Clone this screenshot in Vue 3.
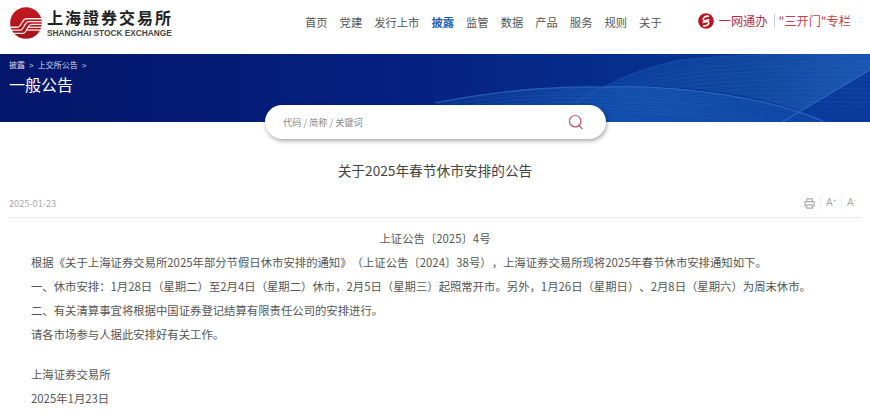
<script setup>
const navItems = ['首页', '党建', '发行上市', '披露', '监管', '数据', '产品', '服务', '规则', '关于']
const bodyLines = [
  '根据《关于上海证券交易所2025年部分节假日休市安排的通知》（上证公告〔2024〕38号），上海证券交易所现将2025年春节休市安排通知如下。',
  '一、休市安排：1月28日（星期二）至2月4日（星期二）休市，2月5日（星期三）起照常开市。另外，1月26日（星期日）、2月8日（星期六）为周末休市。',
  '二、有关清算事宜将根据中国证券登记结算有限责任公司的安排进行。',
  '请各市场参与人据此安排好有关工作。',
]
const fineLines = Array.from({ length: 11 }, (_, i) => {
  const d = i * 4.5
  return `M${600 + i * 8} ${36 + d * 0.3} C${680 + i * 4} ${8 + d} ${780} ${6 + d} 870 ${8 + d}`
})
const lowerLines = Array.from({ length: 6 }, (_, i) => {
  const d = i * 4
  return `M${450 + i * 10} ${50 + d * 0.6} C${560} ${34 + d} ${680} ${38 + d} ${770 - i * 8} 68`
})
</script>

<template>
  <div class="page">
    <header class="topbar">
      <div class="logo">
        <svg class="logo-mark" viewBox="0 0 34 34" width="34" height="32">
          <defs>
            <linearGradient id="lg" x1="0" y1="0" x2="0" y2="1">
              <stop offset="0" stop-color="#c4161f" />
              <stop offset="1" stop-color="#a5141b" />
            </linearGradient>
          </defs>
          <circle cx="17" cy="17" r="16.800" fill="url(#lg)" />
          <g fill="none" stroke="#f6e8e2" stroke-width="1.400">
            <path d="M1 21.500 L8 21.500 C12 21.500 12.500 13 17 12.500 L33.500 12.500" />
            <path d="M2 24.500 L11 24.500 C15 24.500 15 15.500 20 15.500 L34 15.500" />
            <path d="M4 28 L14 28 C18 28 18 18.500 23 18.500 L34 18.500" />
            <path d="M19 21.500 L34 21.500" />
            <path d="M17 24.500 L32.500 24.500" />
          </g>
        </svg>
        <div class="logo-text">
          <div class="logo-cn">上海證券交易所</div>
          <div class="logo-en">SHANGHAI STOCK EXCHANGE</div>
        </div>
      </div>
      <nav class="nav">
        <a v-for="n in navItems" :key="n" :class="{ active: n === '披露' }">{{ n }}</a>
      </nav>
      <div class="quick">
        <svg viewBox="0 0 16 16" width="16" height="16">
          <circle cx="8" cy="8" r="7.800" fill="#b5161f" />
          <path d="M11 3.200 C7 2.800 4.500 5 5.500 7 C6.500 9 10 6.500 11.500 6.500" fill="none" stroke="#fff" stroke-width="1.600" />
          <path d="M5 12.800 C9 13.200 11.500 11 10.500 9 C9.500 7.500 6 9.500 4.500 9.500" fill="none" stroke="#fff" stroke-width="1.600" />
        </svg>
        <span class="quick-a">一网通办</span>
        <i class="sep"></i>
        <span class="quick-b">"三开门"专栏</span>
      </div>
    </header>

    <section class="hero">
      <svg class="waves" viewBox="0 0 870 68" preserveAspectRatio="none">
        <defs>
          <linearGradient id="bg" x1="0" y1="0" x2="1" y2="0">
            <stop offset="0" stop-color="#04166a" />
            <stop offset="0.45" stop-color="#052080" />
            <stop offset="0.75" stop-color="#06308f" />
            <stop offset="1" stop-color="#0a3f9f" />
          </linearGradient>
          <linearGradient id="band" x1="0" y1="0" x2="1" y2="0">
            <stop offset="0" stop-color="#0a3c9c" />
            <stop offset="0.6" stop-color="#11489f" />
            <stop offset="1" stop-color="#1b57b4" />
          </linearGradient>
          <linearGradient id="low" x1="0" y1="0" x2="1" y2="0">
            <stop offset="0" stop-color="#0a2f8e" />
            <stop offset="0.5" stop-color="#1350ae" />
            <stop offset="1" stop-color="#0e45a4" />
          </linearGradient>
        </defs>
        <rect width="870" height="68" fill="url(#bg)" />
        <path d="M575 49 C620 22 660 6 702 4 C760 -1 820 0 870 1 L870 16 L782 68 L825 68 C780 44 690 28 602 33 Z" fill="url(#band)" />
        <path d="M782 68 L870 16 L870 68 Z" fill="#0a3a9b" />
        <path d="M435 49 C490 38 550 32 602 33 C680 30 770 44 825 68 L510 68 Z" fill="url(#low)" />
        <g fill="none" stroke="#3a74c8" stroke-width="0.500" opacity="0.35">
          <path v-for="d in fineLines" :key="d" :d="d" />
          <path v-for="d in lowerLines" :key="d" :d="d" />
        </g>
        <g fill="none" stroke="#3f7bd0" stroke-width="1.200" opacity="0.6">
          <path d="M435 49 C490 38 550 32 602 33 C680 30 770 44 825 68" />
          <path d="M575 49 C620 22 660 6 702 4 C760 -1 820 0 870 1" opacity="0.4" />
          <path d="M782 68 L870 16" />
        </g>
      </svg>
      <div class="hero-text">
        <div class="crumbs">披露<span class="gt">&gt;</span>上交所公告<span class="gt">&gt;</span></div>
        <h1>一般公告</h1>
      </div>
      <div class="search">
        <span class="placeholder">代码 / 简称 / 关键词</span>
        <svg viewBox="0 0 16 16" width="16" height="16">
          <circle cx="7.200" cy="7.200" r="5.700" fill="none" stroke="#b85a60" stroke-width="1.200" />
          <path d="M11.200 11.500 L14.500 15" stroke="#b85a60" stroke-width="1.200" fill="none" />
        </svg>
      </div>
    </section>

    <main class="article">
      <h2>关于2025年春节休市安排的公告</h2>
      <div class="meta">
        <span class="date">2025-01-23</span>
        <div class="tools">
          <svg viewBox="0 0 12 12" width="11" height="11">
            <path d="M3 4 V1 H9 V4 M3 9 H1 V4 H11 V9 H9 M3 7.500 H9 V11 H3 Z" fill="none" stroke="#aaa" stroke-width="1.200" />
          </svg>
          <span class="tool">A<sup>+</sup></span>
          <span class="tool">A<sup>-</sup></span>
        </div>
      </div>
      <div class="content">
        <p class="center">上证公告〔2025〕4号</p>
        <p v-for="l in bodyLines" :key="l">{{ l }}</p>
        <p class="blank"></p>
        <p>上海证券交易所</p>
        <p>2025年1月23日</p>
      </div>
    </main>
  </div>
</template>

<style>
html, body { margin: 0; background: #fff; overflow: hidden; }
</style>

<style scoped>
.page {
  width: 870px;
  height: 414px;
  overflow: hidden;
  font-family: "Noto Sans CJK SC", "Noto Sans", sans-serif;
  color: #555;
}
.topbar {
  height: 54px;
  display: flex;
  align-items: center;
  box-sizing: border-box;
  padding: 0 19px 9px 9px;
}
.logo { display: flex; align-items: center; gap: 4px; width: 296px; flex: none; }
.logo-mark { flex: none; }
.logo-text { display: flex; flex-direction: column; }
.logo-cn {
  font-family: "Noto Sans CJK TC", sans-serif;
  font-size: 16px;
  font-weight: 700;
  letter-spacing: 2px;
  line-height: 21px;
  color: #222;
  white-space: nowrap;
}
.logo-en {
  font-family: "Liberation Sans", sans-serif;
  font-size: 8.300px;
  font-weight: 700;
  line-height: 10px;
  color: #444;
  white-space: nowrap;
}
.nav { display: flex; gap: 12px; margin-bottom: 2px; font-size: 11.300px; line-height: 16px; color: #555; white-space: nowrap; }
.nav .active { color: #1f62b5; font-weight: 700; }
.quick { margin-left: auto; margin-bottom: 4px; display: flex; align-items: center; font-size: 12.200px; color: #b5303a; white-space: nowrap; }
.quick-a { margin-left: 5px; }
.sep { width: 1px; height: 14px; background: #ccc; margin: 0 4px 0 6px; }
.quick-b { color: #c2424c; }

.hero { position: relative; height: 68px; }
.waves { position: absolute; inset: 0; width: 100%; height: 100%; display: block; }
.hero-text { position: relative; padding: 4px 0 0 9px; color: #fff; }
.crumbs { font-size: 8px; line-height: 14px; color: #d6def0; white-space: nowrap; }
.gt { margin: 0 4px; font-family: "Liberation Sans", sans-serif; }
h1 { margin: -1px 0 0; font-size: 16px; font-weight: 400; line-height: 24px; }
.search {
  position: absolute;
  left: 265px;
  top: 51px;
  width: 341px;
  height: 34px;
  box-sizing: border-box;
  padding: 0 22px 0 18px;
  background: #fff;
  border-radius: 17px;
  box-shadow: 1px 2px 4px rgba(0, 0, 0, 0.35);
  display: flex;
  align-items: center;
  justify-content: space-between;
}
.placeholder { font-size: 9.200px; color: #888; }

.article { padding: 0 8px; }
h2 {
  margin: 0;
  padding-top: 37px;
  font-size: 13.700px;
  line-height: 22px;
  font-weight: 400;
  color: #444;
  text-align: center;
}
.meta {
  margin-top: 8px;
  height: 29px;
  box-sizing: border-box;
  border-bottom: 1px solid #e8e8e8;
  display: flex;
  align-items: center;
  justify-content: space-between;
  padding: 0 0 0 1px;
}
.date { font-size: 9.200px; color: #aaa; }
.tools { display: flex; align-items: center; color: #aaa; }
.tools svg { margin-right: 5px; }
.tool { font-family: "Liberation Sans", sans-serif; font-size: 10px; width: 21px; box-sizing: border-box; border-left: 1px solid #eee; padding-left: 5px; line-height: 14px; }
.tool sup { font-size: 6px; line-height: 0; }
.content { padding: 8px 0 0 23px; font-size: 11.370px; color: #555; text-spacing-trim: space-all; }
.content p { margin: 0; height: 24px; line-height: 24px; white-space: nowrap; }
.content .center { text-align: center; padding-right: 23px; }
.content .blank { height: 16px; }
</style>
